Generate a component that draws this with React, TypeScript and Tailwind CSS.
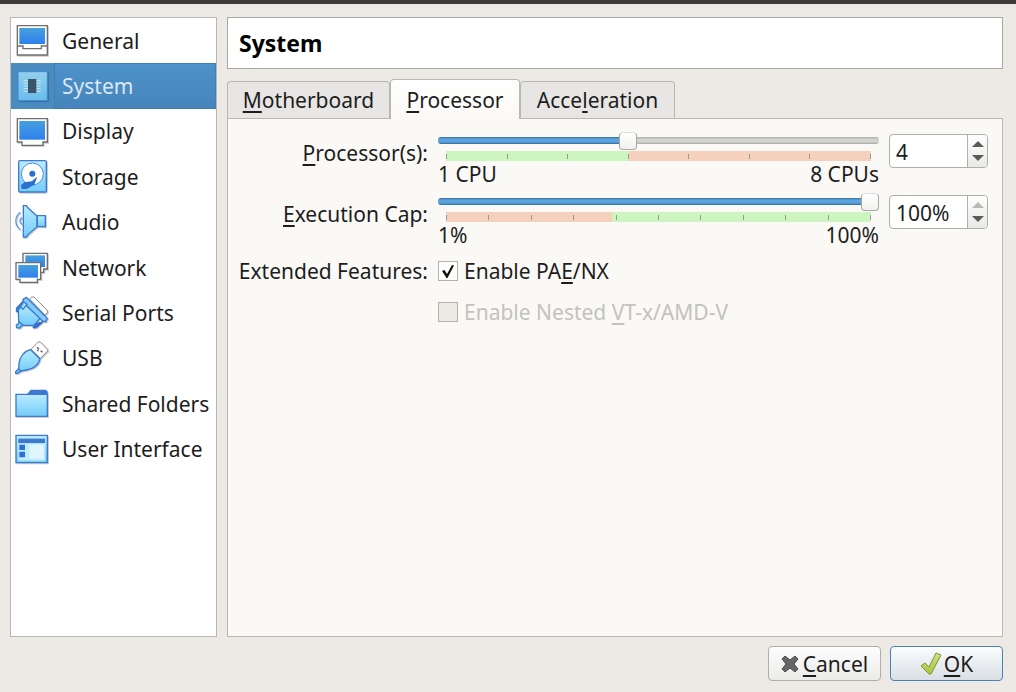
import { useState, type ReactNode } from "react";

function Svg({ children }: { children: ReactNode }) {
  return (
    <svg viewBox="0 0 102 102" className="h-[34px] w-[34px] shrink-0 drop-shadow-[1px_1px_0px_rgba(0,0,0,0.2)]" fill="none" aria-hidden="true">
      {children}
    </svg>
  );
}

function Gradients() {
  return (
    <svg className="absolute h-0 w-0" aria-hidden="true">
      <defs>
        <linearGradient id="screen" x1="0" y1="0" x2="0" y2="1">
          <stop offset="0" stopColor="#46a0dc" />
          <stop offset="1" stopColor="#2f80f0" />
        </linearGradient>
        <linearGradient id="sky" x1="0" y1="0" x2="0" y2="1">
          <stop offset="0" stopColor="#b9ecff" />
          <stop offset="1" stopColor="#74ccf8" />
        </linearGradient>
        <linearGradient id="chip" x1="0" y1="0" x2="0" y2="1">
          <stop offset="0" stopColor="#93cfea" />
          <stop offset="1" stopColor="#68bdea" />
        </linearGradient>
        <linearGradient id="tick" x1="0" y1="0" x2="0" y2="1">
          <stop offset="0" stopColor="#d3e089" />
          <stop offset="1" stopColor="#a6c63f" />
        </linearGradient>
      </defs>
    </svg>
  );
}

const GeneralIcon = (
  <Svg>
    <path d="M7 5H97V93H7Z" fill="#fff" stroke="#6f6f6f" strokeWidth="4" />
    <path d="M7 66H24V74H79V66H97" stroke="#6f6f6f" strokeWidth="4" />
    <path d="M13 12H90V60H13Z" fill="url(#screen)" />
  </Svg>
);

const SystemIcon = (
  <Svg>
    <path d="M9 8H97V95H9Z" fill="url(#chip)" stroke="#3b86d6" strokeWidth="3" />
    <path d="M26 35H77M26 43H77M26 51H77M26 59H77M26 67H77" stroke="#c4e6f5" strokeWidth="3" />
    <path d="M39 30H64V72H39Z" fill="#3c5468" />
  </Svg>
);

const DisplayIcon = (
  <Svg>
    <path d="M7 14H97V84H84V94H21V84H7Z" fill="#fff" stroke="#6f6f6f" strokeWidth="4" />
    <path d="M13 21H90V77H13Z" fill="url(#screen)" />
  </Svg>
);

const StorageIcon = (
  <Svg>
    <rect x="11" y="2" width="83" height="94" rx="4" fill="url(#sky)" stroke="#3c7bd0" strokeWidth="4" />
    <circle cx="52" cy="42" r="33" fill="#fff" stroke="#4c8fdc" strokeWidth="3" />
    <path d="M67 50L58 74L35 87H20L18 76L28 67L50 64Z" fill="#2c70d0" />
    <circle cx="52" cy="41" r="9" fill="#2c6fd0" />
  </Svg>
);

const AudioIcon = (
  <Svg>
    <path d="M16 22C-2 36 -2 60 16 74M21 38C13 42 13 54 21 58" stroke="#5b9be0" strokeWidth="4" />
    <path d="M25 2H34L40 10L66 33V65L40 88L34 96H25Z" fill="url(#sky)" stroke="#3c7bd0" strokeWidth="4" />
    <path d="M67 32H91V65H67Z" fill="url(#sky)" stroke="#3c7bd0" strokeWidth="4" />
  </Svg>
);

const NetworkIcon = (
  <Svg>
    <path d="M24 7H97V54H86V64H30V54H24Z" fill="#fff" stroke="#6f6f6f" strokeWidth="4" />
    <path d="M31 13H90V48H31Z" fill="url(#screen)" />
    <path d="M3 35H77V85H67V94H15V85H3Z" fill="#fff" stroke="#6f6f6f" strokeWidth="4" />
    <path d="M10 42H69V80H10Z" fill="url(#screen)" />
  </Svg>
);

const SerialIcon = (
  <Svg>
    <path d="M44 9L50 3L57 3L97 43V51L90 57Z" fill="#fff" stroke="#8a8a8a" strokeWidth="3" />
    <path d="M25 14L4 36L4 48L17 43Z" fill="#3b7dda" stroke="#2e6fce" strokeWidth="3" />
    <path d="M86 76L65 95L54 96L57 85Z" fill="#2e6fce" stroke="#2e6fce" strokeWidth="3" />
    <path d="M17 76L4 88L5 95L14 96L27 84Z" fill="#7ccaf6" stroke="#3c7bd0" strokeWidth="4" />
    <path d="M26 22L10 42L11 76L25 88H57L76 66Z" fill="url(#sky)" stroke="#3c7bd0" strokeWidth="4" />
    <path d="M24 10L34 4L97 67L92 78L82 74L24 19Z" fill="#83ccfa" stroke="#3c7bd0" strokeWidth="4" />
    <path d="M17 32L26 17L36 25L24 40Z" fill="#a6dffb" stroke="#3c7bd0" strokeWidth="4" />
  </Svg>
);

const UsbIcon = (
  <Svg>
    <path d="M48 25L70 3L76 3L98 25V30L76 52Z" fill="#fff" stroke="#858585" strokeWidth="3" />
    <path d="M66 19L72 25M77 29L82 34M67 27L70 30" stroke="#555" strokeWidth="4" />
    <path d="M14 80L2 92V97H8L23 87Z" fill="#7ccaf6" stroke="#3c7bd0" strokeWidth="4" />
    <path d="M47 26C27 30 14 48 12 68L11 84L17 90L34 87C54 84 70 73 75 54Z" fill="url(#sky)" stroke="#3c7bd0" strokeWidth="4" />
  </Svg>
);

const FolderIcon = (
  <Svg>
    <path d="M36 22L47 8H93L98 14V26H36Z" fill="#3f78cf" />
    <path d="M3 22H97V88H3Z" fill="url(#sky)" stroke="#3c7bd0" strokeWidth="4" />
  </Svg>
);

const InterfaceIcon = (
  <Svg>
    <path d="M3 10H97V92H3Z" fill="url(#sky)" stroke="#3c7bd0" strokeWidth="4" />
    <path d="M10 20H90V33H10Z" fill="#3f78cf" />
    <path d="M10 35H90V86H10Z" fill="#c3ecfc" />
    <path d="M13 38H30V54H13ZM13 59H30V76H13Z" fill="#2d6fd4" />
    <path d="M43 38H86V80H43Z" fill="#e0f6fe" />
  </Svg>
);

const SECTIONS = [
  { name: "General", icon: GeneralIcon },
  { name: "System", icon: SystemIcon },
  { name: "Display", icon: DisplayIcon },
  { name: "Storage", icon: StorageIcon },
  { name: "Audio", icon: AudioIcon },
  { name: "Network", icon: NetworkIcon },
  { name: "Serial Ports", icon: SerialIcon },
  { name: "USB", icon: UsbIcon },
  { name: "Shared Folders", icon: FolderIcon },
  { name: "User Interface", icon: InterfaceIcon },
];

const TABS = [
  { before: "", key: "M", after: "otherboard", width: "w-[163px]" },
  { before: "", key: "P", after: "rocessor", width: "w-[130px]" },
  { before: "Acce", key: "l", after: "eration", width: "w-[155px]" },
];

// Label with an underlined access key
function Mnemonic({ before = "", accessKey, after }: { before?: string; accessKey: string; after: string }) {
  return (
    <span>
      {before}
      <span className="underline decoration-2 underline-offset-3">{accessKey}</span>
      {after}
    </span>
  );
}

type SliderProps = {
  id: string;
  min: number;
  max: number;
  value: number;
  onChange: (value: number) => void;
  ticks: number;
  split: number;
  lowIsGood: boolean;
  minLabel: string;
  maxLabel: string;
};

function Slider({ id, min, max, value, onChange, ticks, split, lowIsGood, minLabel, maxLabel }: SliderProps) {
  const filled = ((value - min) / (max - min)) * 100;
  return (
    <div className="flex flex-col">
      <input
        id={id}
        type="range"
        min={min}
        max={max}
        value={value}
        onChange={(e) => onChange(Number(e.target.value))}
        style={{ backgroundSize: `${filled}% 100%, 100% 100%` }}
        className="m-0 block h-[7px] w-full appearance-none rounded-[3px] bg-[linear-gradient(#3a6f9c,#5ba3df_30%,#5ba3df_70%,#356a98),linear-gradient(#a9a9a5,#d2d2ce_30%,#d2d2ce_70%,#a9a9a5)] bg-no-repeat [&::-webkit-slider-thumb]:h-[18px] [&::-webkit-slider-thumb]:w-[18px] [&::-webkit-slider-thumb]:appearance-none [&::-webkit-slider-thumb]:rounded-[4px] [&::-webkit-slider-thumb]:border [&::-webkit-slider-thumb]:border-[#a8a8a4] [&::-webkit-slider-thumb]:border-t-[#dededb] [&::-webkit-slider-thumb]:bg-[linear-gradient(#ffffff,#f1f1f0)]"
      />
      <div className="mx-2 mt-[7px] flex h-[10px]">
        <div className={lowIsGood ? "bg-[#ccf5c0]" : "bg-[#f5d0bc]"} style={{ width: `${split}%` }} />
        <div className={lowIsGood ? "flex-1 bg-[#f5d0bc]" : "flex-1 bg-[#ccf5c0]"} />
      </div>
      <div className="mx-2 -mt-[7px] mb-[3px] flex h-[5px] justify-between">
        {Array.from({ length: ticks }, (_, i) => (
          <span key={i} className="w-px bg-[#999994]" />
        ))}
      </div>
      <div className="flex justify-between leading-[24px]">
        <span>{minLabel}</span>
        <span>{maxLabel}</span>
      </div>
    </div>
  );
}

type SpinBoxProps = {
  label: string;
  value: number;
  suffix?: string;
  min: number;
  max: number;
  onChange: (value: number) => void;
};

function SpinBox({ label, value, suffix = "", min, max, onChange }: SpinBoxProps) {
  const set = (next: number) => onChange(Math.min(max, Math.max(min, next || min)));
  return (
    <div className="flex h-[34px] w-[99px] overflow-hidden rounded-[4px] border border-[#b0aea9] bg-white">
      <input
        type="text"
        aria-label={label}
        value={`${value}${suffix}`}
        onChange={(e) => set(parseInt(e.target.value, 10))}
        className="w-0 min-w-0 flex-1 bg-transparent pt-[2px] pl-[6px] outline-none"
      />
      <div className="flex w-[20px] flex-col border-l border-[#b0aea9] bg-[linear-gradient(#fefefe,#e9e9e8)]">
        <button
          type="button"
          aria-label={`Increase ${label}`}
          disabled={value >= max}
          onClick={() => set(value + 1)}
          className="flex flex-1 items-end justify-center pb-[4px] text-[#5a5a58] disabled:text-[#b9b9b7]"
        >
          <svg viewBox="0 0 12 6" className="h-[6px] w-[12px]" aria-hidden="true">
            <path d="M6 0L12 6H0Z" fill="currentColor" />
          </svg>
        </button>
        <button
          type="button"
          aria-label={`Decrease ${label}`}
          disabled={value <= min}
          onClick={() => set(value - 1)}
          className="flex flex-1 items-start justify-center pt-[4px] text-[#5a5a58] disabled:text-[#b9b9b7]"
        >
          <svg viewBox="0 0 12 6" className="h-[6px] w-[12px]" aria-hidden="true">
            <path d="M0 0H12L6 6Z" fill="currentColor" />
          </svg>
        </button>
      </div>
    </div>
  );
}

type CheckProps = {
  checked: boolean;
  disabled?: boolean;
  onChange?: (checked: boolean) => void;
  children: ReactNode;
};

function Check({ checked, disabled, onChange, children }: CheckProps) {
  return (
    <label className={`flex h-[24px] items-center gap-[6px] ${disabled ? "text-[#c3c2bf]" : ""}`}>
      <span className="grid">
        <input
          type="checkbox"
          checked={checked}
          disabled={disabled}
          onChange={(e) => onChange?.(e.target.checked)}
          className="col-start-1 row-start-1 h-[20px] w-[20px] appearance-none border border-[#b4b2ad] bg-white disabled:bg-[#edeae6]"
        />
        {checked && (
          <svg viewBox="0 0 20 20" className="pointer-events-none col-start-1 row-start-1 h-[20px] w-[20px]" aria-hidden="true">
            <path d="M4 10L6.500 9L9 13L14 4L16 4.500L9.500 17H8.500Z" fill="#111" />
          </svg>
        )}
      </span>
      {children}
    </label>
  );
}

export default function App() {
  const [section, setSection] = useState("System");
  const [tab, setTab] = useState(1);
  const [cpus, setCpus] = useState(4);
  const [cap, setCap] = useState(100);
  const [pae, setPae] = useState(true);

  return (
    <div className="flex min-h-screen flex-col border-t-4 border-[#3c3b37] bg-[#edeae5] pt-[13px] pr-[13px] pb-[11px] pl-[10px] font-['Noto_Sans','Open_Sans',sans-serif] text-[21px] leading-[24px] text-[#1d1d1d]">
      <Gradients />
      <div className="flex flex-1 gap-[10px]">
        <nav className="w-[207px] shrink-0 border border-[#b9b7b2] bg-white">
          <ul className="grid h-[454px] grid-rows-10">
            {SECTIONS.map(({ name, icon }) => (
              <li key={name} className="min-h-0">
                <button
                  type="button"
                  onClick={() => setSection(name)}
                  className={
                    name === section
                      ? "flex h-full w-full items-center bg-[#4a8bc0] pl-[4px] text-left text-[#dbe8f3]"
                      : "flex h-full w-full items-center pl-[4px] text-left"
                  }
                >
                  {icon}
                  <span
                    className={
                      name === section
                        ? "ml-[5px] flex h-full flex-1 items-center border border-[#417fb2] bg-[linear-gradient(#4d92ca,#4685bb)] pl-[7px] whitespace-nowrap"
                        : "ml-[13px] whitespace-nowrap"
                    }
                  >
                    {name}
                  </span>
                </button>
              </li>
            ))}
          </ul>
        </nav>

        <main className="flex min-w-0 flex-1 flex-col">
          <h1 className="flex h-[52px] items-center border border-[#a9a7a3] bg-white pl-[11px] text-[23px] font-bold text-black">
            {section}
          </h1>

          <div role="tablist" className="mt-[10px] flex items-end">
            {TABS.map((t, i) => (
              <button
                key={t.key}
                type="button"
                role="tab"
                aria-selected={i === tab}
                onClick={() => setTab(i)}
                className={`${t.width} ${
                  i === tab
                    ? "z-10 -mb-px h-[40px] rounded-t-[4px] border border-b-0 border-[#b9b7b2] bg-[linear-gradient(#ffffff,#faf9f6)] text-center"
                    : "h-[37px] rounded-t-[4px] border border-b-0 border-[#b9b7b2] bg-[#e7e6e4] text-center"
                }`}
              >
                <Mnemonic before={t.before} accessKey={t.key} after={t.after} />
              </button>
            ))}
          </div>

          <div role="tabpanel" className="flex-1 border border-[#b9b7b2] bg-[#faf9f6] pt-[15px] pr-[14px]">
            <div className="grid grid-cols-[200px_1fr_99px] gap-x-[10px]">
              <label htmlFor="cpus" className="mt-[7px] h-[54px] text-right">
                <Mnemonic accessKey="P" after="rocessor(s):" />
              </label>
              <div className="pt-[3px]">
                <Slider id="cpus" min={1} max={8} value={cpus} onChange={setCpus} ticks={8} split={43} lowIsGood minLabel="1 CPU" maxLabel="8 CPUs" />
              </div>
              <SpinBox label="Processor(s)" min={1} max={8} value={cpus} onChange={setCpus} />

              <label htmlFor="cap" className="mt-[7px] h-[54px] text-right">
                <Mnemonic accessKey="E" after="xecution Cap:" />
              </label>
              <div className="pt-[3px]">
                <Slider id="cap" min={1} max={100} value={cap} onChange={setCap} ticks={11} split={39} lowIsGood={false} minLabel="1%" maxLabel="100%" />
              </div>
              <SpinBox label="Execution Cap" min={1} max={100} suffix="%" value={cap} onChange={setCap} />

              <span className="mt-[3px] text-right">Extended Features:</span>
              <div className="col-span-2 mt-[3px] flex flex-col gap-[17px]">
                <Check checked={pae} onChange={setPae}>
                  <Mnemonic before="Enable PA" accessKey="E" after="/NX" />
                </Check>
                <Check checked={false} disabled>
                  <Mnemonic before="Enable Nested " accessKey="V" after="T-x/AMD-V" />
                </Check>
              </div>
            </div>
          </div>
        </main>
      </div>

      <footer className="mt-[9px] flex justify-end gap-[9px]">
        <button
          type="button"
          className="flex h-[35px] w-[113px] items-center justify-center gap-[4px] rounded-[4px] border border-[#b0aea9] bg-[linear-gradient(#fdfdfd,#ecebea)]"
        >
          <svg viewBox="0 0 18 18" className="h-[18px] w-[18px]" aria-hidden="true">
            <path d="M4 1L9 5L14 1L17 4L13 9L17 14L14 17L9 13L4 17L1 14L5 9L1 4Z" fill="#666" stroke="#4d4d4d" strokeLinejoin="round" />
          </svg>
          <Mnemonic accessKey="C" after="ancel" />
        </button>
        <button
          type="button"
          className="flex h-[35px] w-[113px] items-center justify-center gap-[2px] rounded-[4px] border border-[#4a83b0] bg-[linear-gradient(#fbfcfd,#d9dfe4)]"
        >
          <svg viewBox="0 0 22 24" className="h-[24px] w-[22px]" aria-hidden="true">
            <path d="M1 14L5 11L9 15L16 1L21 3L11 22H9Z" fill="url(#tick)" stroke="#7d9438" strokeLinejoin="round" />
          </svg>
          <Mnemonic accessKey="O" after="K" />
        </button>
      </footer>
    </div>
  );
}
